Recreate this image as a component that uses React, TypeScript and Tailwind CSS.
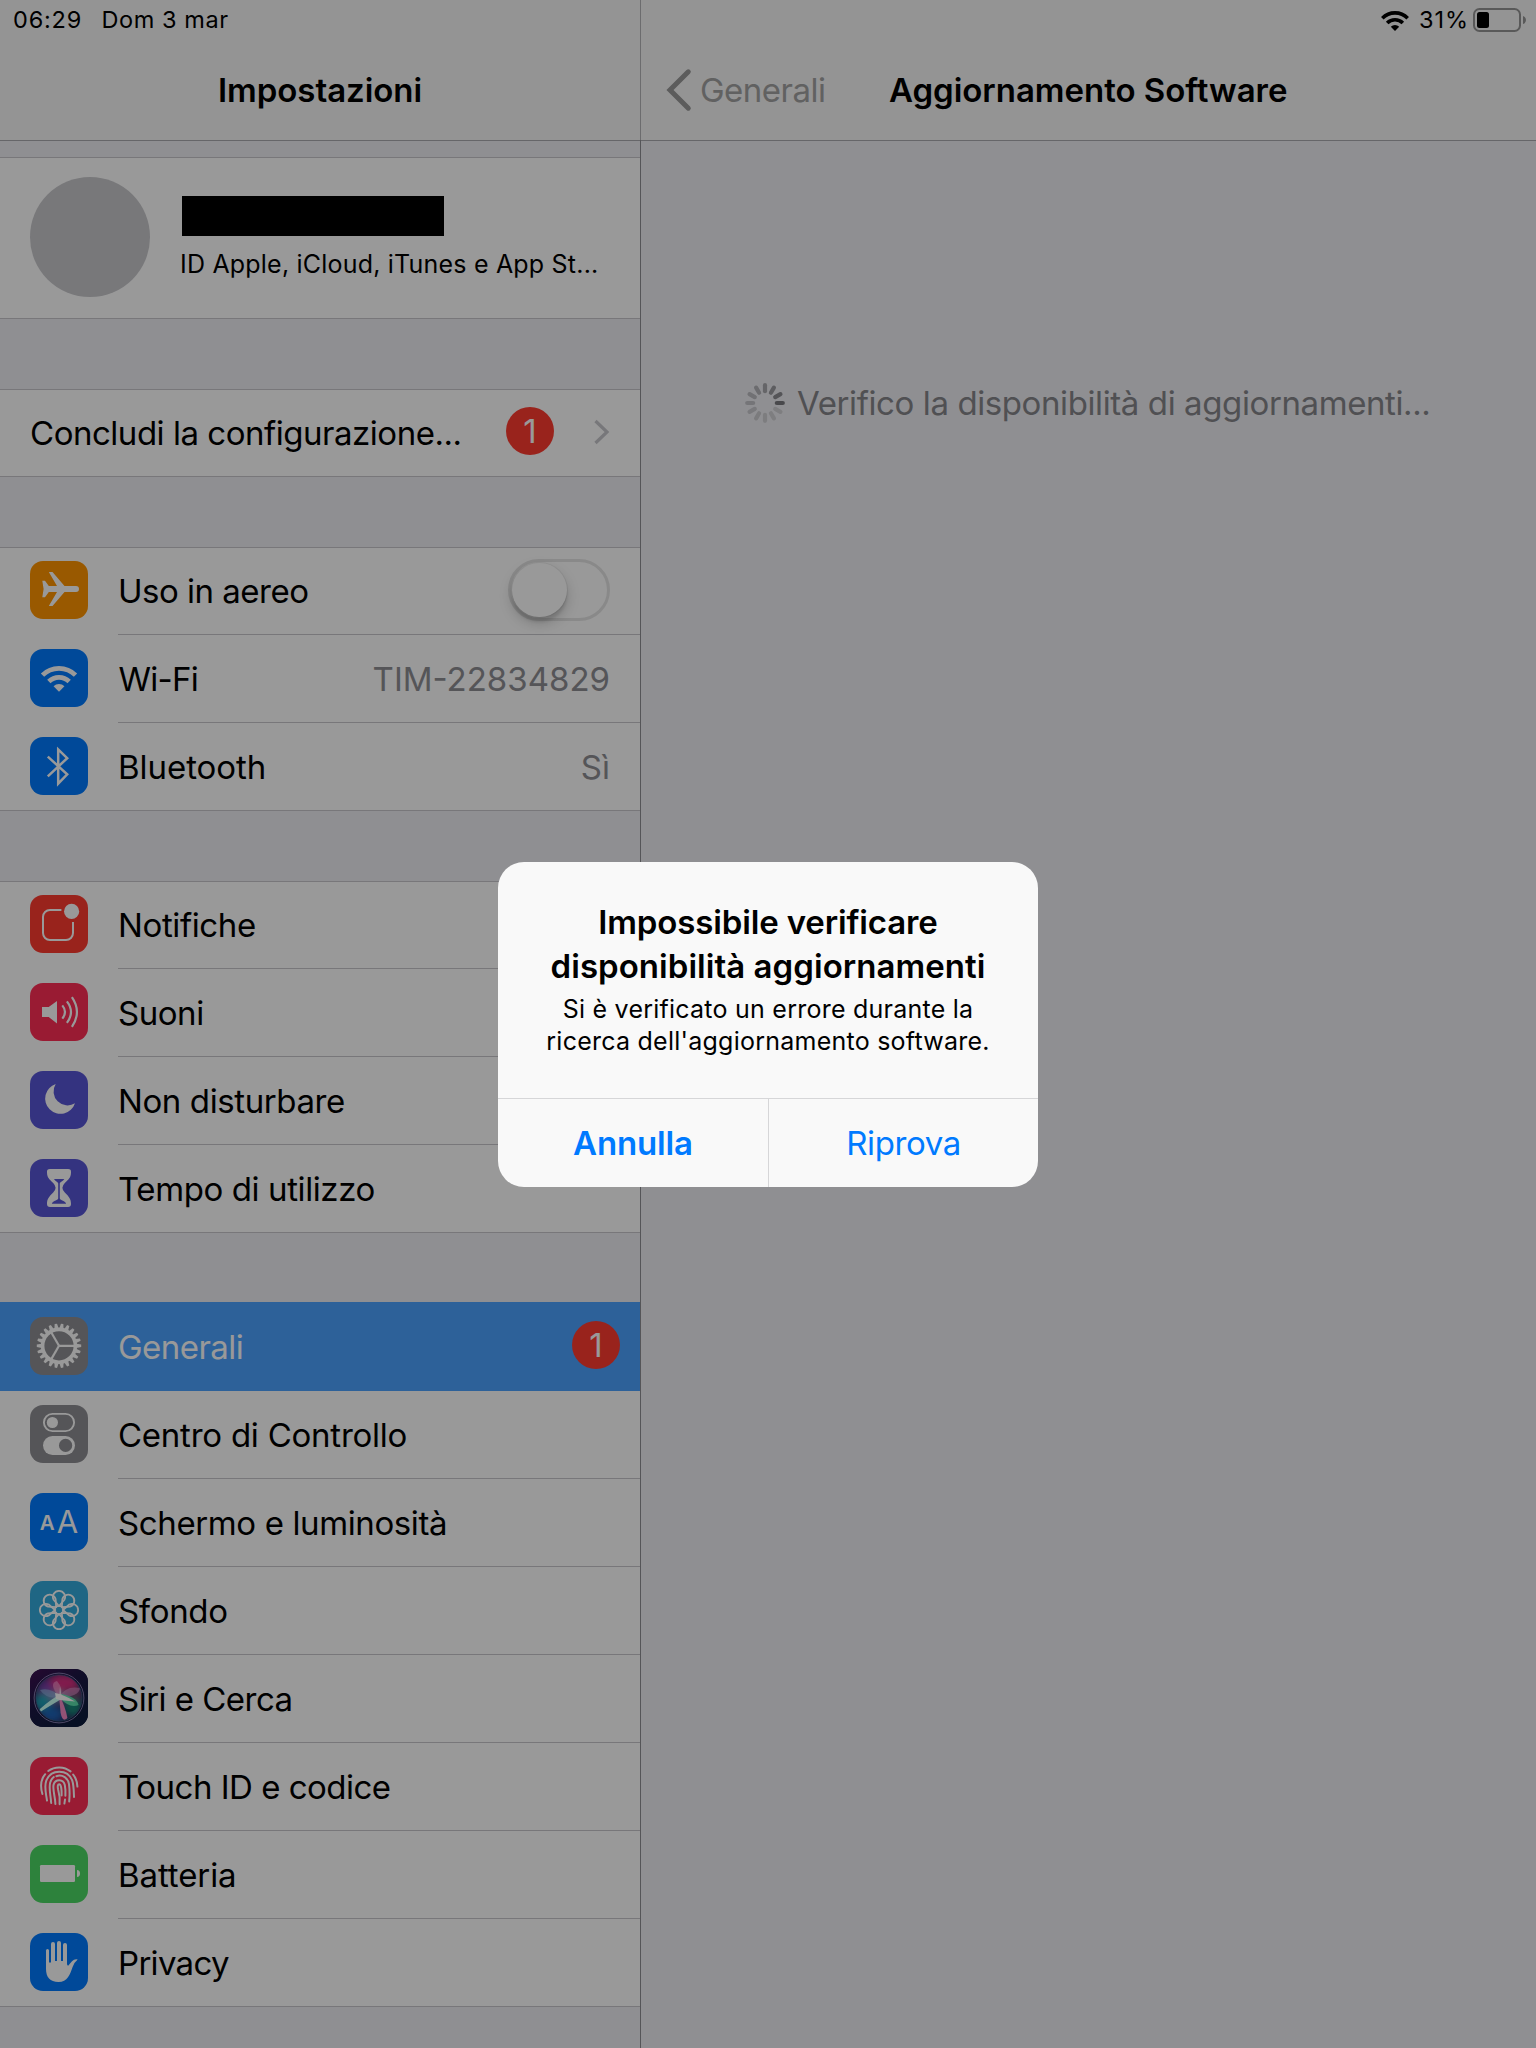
import type { ReactNode } from "react";

function WifiGlyph({ className }: { className: string }) {
  return (
    <svg viewBox="0 0 36.4 25.7" className={className} fill="none" stroke="currentColor">
      <path d="M1.69 9.19A23.35 23.35 0 0 1 34.71 9.19" strokeWidth="4.7" />
      <path d="M8.02 15.52A14.4 14.4 0 0 1 28.38 15.52" strokeWidth="4.7" />
      <path d="M18.2 25.7L12.75 20.25A7.7 7.7 0 0 1 23.65 20.25Z" fill="currentColor" stroke="none" />
    </svg>
  );
}

function Icon({ bg, children }: { bg: string; children: ReactNode }) {
  return (
    <div className={`mt-[14px] mr-[30px] ml-[30px] h-[58px] w-[58px] shrink-0 overflow-hidden rounded-[13px] text-white ${bg}`}>
      <svg viewBox="0 0 58 58" className="h-full w-full" fill="currentColor">
        {children}
      </svg>
    </div>
  );
}

const airplane = (
  <path d="M12.3 19.7H15L18.8 25H27L18.8 11H22.5L34.5 25H46a3 3 0 0 1 0 6H34.5L22.5 45H18.8L27 31H18.8L15 36.3H12.3L13.6 28Z" />
);

const wifi = (
  <g fill="none" stroke="currentColor" strokeWidth="4.7">
    <path d="M12.49 26.19A23.35 23.35 0 0 1 45.51 26.19" />
    <path d="M18.82 32.52A14.4 14.4 0 0 1 39.18 32.52" />
    <path d="M29 42.7L23.55 37.25A7.7 7.7 0 0 1 34.45 37.25Z" fill="currentColor" stroke="none" />
  </g>
);

const bluetooth = (
  <path
    d="M17.8 19.6L37.2 37.4L28.2 46.6V12.4L37.2 21.2L17.8 39.4"
    fill="none"
    stroke="currentColor"
    strokeWidth="2.5"
  />
);

const notifications = (
  <>
    <path
      d="M31.4 15H20a7 7 0 0 0-7 7V38a7 7 0 0 0 7 7H36a7 7 0 0 0 7-7V27"
      fill="none"
      stroke="currentColor"
      strokeWidth="2"
    />
    <circle cx="41.6" cy="16.4" r="7.6" />
  </>
);

const sounds = (
  <>
    <path d="M12 24H18.7L27 18V40.4L18.7 34H12Z" />
    <g fill="none" stroke="currentColor" strokeWidth="2.2">
      <path d="M32.3 22.4Q37.7 29 32.3 35.6" />
      <path d="M36.9 18.3Q45.1 29 36.9 39.8" />
      <path d="M41.9 14.2Q52 29 41.9 43.8" />
    </g>
  </>
);

const moon = <path d="M25.7 13A15.3 15.3 0 1 0 45 32.3A14 14 0 0 1 25.7 13Z" />;

const hourglass = (
  <>
    <path d="M20 10H38a3 3 0 0 1 3 3.3C41 19 38.5 20.2 34.8 24Q32.4 26.6 32.4 28.8T34.8 33.6C39 37.8 41 40 41 45a3 3 0 0 1-3 3H20a3 3 0 0 1-3-3C17 40 19 37.8 23.2 33.6Q25.6 31 25.6 28.8T23.2 24C19.5 20.2 17 19 17 13.3A3 3 0 0 1 20 10Z" />
    <path
      className="text-[#5856d6]"
      d="M24 20H34.3C33 22.6 30 22.8 29.8 24.4V39.6C30.4 41.6 35.4 42 36.2 44.8H21.8C22.6 42 27.6 41.6 28.2 39.6V24.4C28 22.8 25.3 22.6 24 20Z"
      fill="currentColor"
    />
  </>
);

const GEAR_TEETH = Array.from({ length: 22 }, (_, i) => (i * 360) / 22);

const gear = (
  <g transform="translate(29 28.8)">
    <circle r="16.4" fill="none" stroke="currentColor" strokeWidth="3.6" />
    {GEAR_TEETH.map((a) => (
      <path key={a} d="M17.4 -2.1L22.2 -1.2V1.2L17.4 2.1Z" transform={`rotate(${a})`} />
    ))}
    {[0, 120, 240].map((a) => (
      <path key={a} d="M0 -1.1H15.4V1.1H0Z" transform={`rotate(${a})`} />
    ))}
  </g>
);

const controlCenter = (
  <>
    <rect x="13.9" y="8.9" width="30.2" height="17.2" rx="8.6" fill="none" stroke="currentColor" strokeWidth="1.9" />
    <circle cx="22.4" cy="17.5" r="5.6" />
    <rect x="13" y="31" width="32" height="19" rx="9.5" />
    <circle cx="35.6" cy="40.4" r="6.6" className="text-[#8e8e93]" fill="currentColor" />
  </>
);

const display = (
  <g className="font-['Inter']" textAnchor="middle">
    <text x="17.2" y="37.3" fontSize="20.5" fontWeight="600">A</text>
    <text x="37.5" y="40" fontSize="31" fontWeight="400">A</text>
  </g>
);

const wallpaper = (
  <g transform="translate(29 29)" fill="none" stroke="currentColor" strokeWidth="1.8">
    <circle r="4.2" />
    {[0, 45, 90, 135, 180, 225, 270, 315].map((a) => (
      <path key={a} d="M0 -4L-5.4 -10.2A6.1 6.1 0 1 1 5.4 -10.2Z" transform={`rotate(${a})`} />
    ))}
  </g>
);

const siri = (
  <>
    <defs>
      <linearGradient id="siriBg" x1="0" y1="0" x2="0.7" y2="1">
        <stop offset="0" stopColor="#3f0f52" />
        <stop offset="0.5" stopColor="#1a1744" />
        <stop offset="1" stopColor="#0c1c3c" />
      </linearGradient>
      <filter id="siriSoft" x="-50%" y="-50%" width="200%" height="200%">
        <feGaussianBlur stdDeviation="3.6" />
      </filter>
      <filter id="siriGlow" x="-50%" y="-50%" width="200%" height="200%">
        <feGaussianBlur stdDeviation="0.6" />
      </filter>
      <clipPath id="siriOrb">
        <circle cx="29" cy="29" r="23" />
      </clipPath>
    </defs>
    <rect width="58" height="58" fill="url(#siriBg)" />
    <g clipPath="url(#siriOrb)">
      <rect width="58" height="58" fill="#2a2c60" />
      <g filter="url(#siriSoft)">
        <ellipse cx="33" cy="14" rx="16" ry="9" fill="#d82f80" />
        <ellipse cx="16" cy="20" rx="8" ry="9" fill="#7a3ea8" />
        <ellipse cx="13" cy="33" rx="9" ry="9" fill="#1fa0b4" />
        <ellipse cx="22" cy="45" rx="11" ry="8" fill="#1d64b8" />
        <ellipse cx="43" cy="38" rx="9" ry="9" fill="#128a78" />
        <ellipse cx="46" cy="24" rx="6" ry="6" fill="#7c3a6c" />
        <ellipse cx="28" cy="28" rx="8" ry="5" fill="#b8c8f0" opacity="0.7" />
      </g>
      <g filter="url(#siriGlow)">
        <path d="M30 27Q20 18 10 21Q17 31 30 28Z" fill="#8fb4e0" opacity="0.6" />
        <path d="M29 28Q18 14 27 12Q34 20 30 28Z" fill="#f59fd0" opacity="0.6" />
        <path d="M29 28Q36 16 50 19Q49 28 30 28Z" fill="#d993c8" opacity="0.6" />
        <path d="M30 25Q46 27 48.6 36Q40 40 30 29Z" fill="#5fe8b0" opacity="0.9" />
        <path d="M29 26Q35 36 37.4 49Q32.6 54 30.6 44Z" fill="#ff8cc8" opacity="0.95" />
        <path d="M31 25Q21 30 9.6 40.2L11 42.4Q24 34.4 33 29Z" fill="#c9fff4" />
        <path d="M25 24Q34 25.6 45 32.4Q33 32 26 30Z" fill="#ffffff" />
        <path d="M29 30L30 17L32 30Z" fill="#ffffff" opacity="0.7" />
      </g>
    </g>
    <circle cx="29" cy="29" r="24.9" fill="none" stroke="#8f86b8" strokeWidth="0.9" />
    <circle cx="29" cy="29" r="23.2" fill="none" stroke="#5c8fb0" strokeWidth="0.6" opacity="0.7" />
  </>
);

const fingerprint = (
  <g fill="none" stroke="currentColor" strokeWidth="2" strokeLinecap="round">
    <path d="M18.2 14A18.6 18.6 0 0 1 40.6 14.4" />
    <path d="M15.2 17.2C10.8 22.4 10 29 12.4 37" />
    <path d="M43.2 17.6C46 21 47.2 25 47.4 29.6" />
    <path d="M17 43.6C16 36 14 30 16.2 23.8C21 11.8 37.4 11.8 42.2 23.4C43.8 28 43.8 34 44 40" />
    <path d="M21.2 46C20.6 38 18.6 31 20.2 25.4C21 22.6 22 21.4 23.8 20" />
    <path d="M26.4 19.2C32.6 17 38.2 21.4 39 27.2C39.6 32 39.8 38 39.2 44.4" />
    <path d="M25.4 47C25.2 40 22.4 32 23.6 27.6C25.4 21.6 33.4 21.8 34.8 28C35.4 31 35.6 35 35.4 38.8" />
    <path d="M35 42.6L34.4 46.6" />
    <path d="M29.6 47.2C30.2 41 29.4 37 28.2 33C27.4 29.6 27.6 27.2 29.2 27.2C31.2 27.2 31.8 33 31.6 38.4" />
  </g>
);

const battery = (
  <>
    <rect x="10" y="20" width="35" height="17" rx="1.2" />
    <path d="M47 25Q50 25.4 50 28.5T47 32Z" />
  </>
);

const hand = (
  <>
    <rect x="16" y="16" width="3" height="20" rx="1.5" />
    <rect x="21" y="9" width="4" height="24" rx="2" />
    <rect x="27" y="8" width="4" height="24" rx="2" />
    <rect x="33" y="10" width="4" height="24" rx="2" />
    <path d="M16 29.5H21V28H37V31Q37.6 34 39.2 31.4L42 28.2Q44.4 25.6 47.7 26.4Q44.4 29 42.6 34C40 41.4 37.6 49 28.5 49C20 49 16 44 16 36Z" />
  </>
);

function Badge({ className }: { className: string }) {
  return (
    <div className={`mt-[18px] h-12 w-12 shrink-0 rounded-full bg-[#ff3b30] text-center text-[33px] leading-[48px] text-white ${className}`}>
      1
    </div>
  );
}

function Group({ children }: { children: ReactNode }) {
  return (
    <div className="mb-[70px] bg-white shadow-[inset_0_1px_0_#c8c7cc,inset_0_-1px_0_#c8c7cc]">{children}</div>
  );
}

type RowProps = {
  bg: string;
  icon: ReactNode;
  label: string;
  tracking?: string;
  last?: boolean;
  selected?: boolean;
  children?: ReactNode;
};

function Row({ bg, icon, label, tracking = "tracking-[-0.45px]", last, selected, children }: RowProps) {
  return (
    <div className={`flex h-[88px] items-start ${selected ? "bg-[#4ca2ff] text-white shadow-[0_-1px_0_#4ca2ff]" : ""}`}>
      <Icon bg={bg}>{icon}</Icon>
      <div className={`flex h-[88px] flex-1 justify-between leading-[88px] ${last || selected ? "" : "border-b border-[#c8c7cc]"}`}>
        <span className={`whitespace-nowrap ${tracking}`}>{label}</span>
        {children}
      </div>
    </div>
  );
}

function Sidebar() {
  return (
    <aside className="h-full w-[640px] shrink-0">
      <header className="h-[141px] border-b border-[#aaaaaf] bg-[#f7f7f7]">
        <div className="flex h-[39px] items-center pl-[13px] text-[23.5px]">
          <span className="mr-[19.5px] tracking-[0.8px]">06:29</span>
          <span className="tracking-[0.55px]">Dom 3 mar</span>
        </div>
        <h1 className="h-[102px] text-center text-[33px] leading-[102px] font-semibold tracking-[-0.06px]">Impostazioni</h1>
      </header>

      <div className="pt-4">
        <Group>
          <div className="flex h-[162px]">
            <div className="mt-5 ml-[30px] h-[120px] w-[120px] rounded-full bg-[#c8c8cc]" />
            <div className="ml-[30px]">
              <div className="mt-[39px] ml-[2px] h-10 w-[262px] bg-black" />
              <div className="mt-[12px] text-[25px] leading-8 tracking-[0.2px] whitespace-nowrap">
                ID Apple, iCloud, iTunes e App St...
              </div>
            </div>
          </div>
        </Group>

        <Group>
          <div className="flex h-[88px] pl-[30px] leading-[88px]">
            <span className="w-[476px] tracking-[-0.476px] whitespace-nowrap">Concludi la configurazione...</span>
            <Badge className="" />
            <svg viewBox="0 0 18 28" className="mt-[29px] ml-[39px] h-7 w-[18px]" fill="none" stroke="#c7c7cc" strokeWidth="3.2">
              <path d="M2.5 3L14 14L2.5 25" />
            </svg>
          </div>
        </Group>

        <Group>
          <Row bg="bg-[#ff9500]" icon={airplane} label="Uso in aereo" tracking="tracking-[-0.5px]">
            <div className="mt-3 mr-[30px] h-[62px] w-[102px] rounded-full border-[3px] border-[#e5e5e5] pt-px pl-px">
              <div className="h-[54px] w-[55px] rounded-full bg-white shadow-[0_0_0_1px_rgba(0,0,0,0.05),0_6px_14px_rgba(0,0,0,0.2),0_5px_3px_rgba(0,0,0,0.1)]" />
            </div>
          </Row>
          <Row bg="bg-[#007aff]" icon={wifi} label="Wi-Fi" tracking="tracking-[-0.7px] ml-[0.5px]">
            <span className="pr-[30px] tracking-[0px] text-[#8e8e93]">TIM-22834829</span>
          </Row>
          <Row bg="bg-[#007aff]" icon={bluetooth} label="Bluetooth" tracking="tracking-[-0.05px]" last>
            <span className="pr-[30px] text-[#8e8e93]">Sì</span>
          </Row>
        </Group>

        <Group>
          <Row bg="bg-[#ff3b30]" icon={notifications} label="Notifiche" tracking="tracking-[-0.38px]" />
          <Row bg="bg-[#ff2d55]" icon={sounds} label="Suoni" />
          <Row bg="bg-[#5856d6]" icon={moon} label="Non disturbare" tracking="tracking-[-0.4px]" />
          <Row bg="bg-[#5856d6]" icon={hourglass} label="Tempo di utilizzo" tracking="tracking-[-0.4px]" last />
        </Group>

        <Group>
          <Row bg="bg-[#8e8e93]" icon={gear} label="Generali" tracking="tracking-[-0.55px]" selected>
            <Badge className="mr-5" />
          </Row>
          <Row bg="bg-[#8e8e93]" icon={controlCenter} label="Centro di Controllo" tracking="tracking-[-0.24px]" />
          <Row bg="bg-[#007aff]" icon={display} label="Schermo e luminosità" tracking="tracking-[-0.38px]" />
          <Row bg="bg-[#34aadc]" icon={wallpaper} label="Sfondo" tracking="tracking-[-0.35px]" />
          <Row bg="bg-[#1a1744]" icon={siri} label="Siri e Cerca" tracking="tracking-[-0.52px]" />
          <Row bg="bg-[#ff2d55]" icon={fingerprint} label="Touch ID e codice" tracking="tracking-[-0.5px]" />
          <Row bg="bg-[#4cd964]" icon={battery} label="Batteria" tracking="tracking-[-0.1px]" />
          <Row bg="bg-[#007aff]" icon={hand} label="Privacy" tracking="tracking-[-0.7px]" last />
        </Group>
      </div>
    </aside>
  );
}

const SPOKES = [
  "#d0d0d4", "#cdcdd1", "#cacacf", "#c4c4c9", "#bcbcc1", "#b4b4b9",
  "#a9a9ae", "#9c9ca1", "#8c8c91", "#7a7a7f", "#d2d2d6", "#d2d2d6",
];

function Spinner() {
  // Spokes run clockwise from six o'clock; the darkest one leads at three o'clock.
  return (
    <svg viewBox="-21 -21 42 42" className="h-[42px] w-[42px]">
      {SPOKES.map((color, i) => (
        <line
          key={i}
          x1="0" y1="11.8" x2="0" y2="17.8"
          stroke={color}
          strokeWidth="4.2"
          strokeLinecap="round"
          transform={`rotate(${i * 30})`}
        />
      ))}
    </svg>
  );
}

function Detail() {
  return (
    <main className="h-full flex-1">
      <header className="h-[141px] border-b border-[#aaaaaf] bg-[#f7f7f7]">
        <div className="flex h-[39px] items-center justify-end pr-[10px] text-[23.5px]">
          <WifiGlyph className="mt-[2px] mr-[10px] h-5 w-[28px]" />
          <span className="mr-1 tracking-[0.96px]">31%</span>
          <svg viewBox="0 0 53 24" className="mt-px h-6 w-[53px]">
            <rect x="1" y="1" width="46" height="22" rx="5.5" fill="none" stroke="#949494" strokeWidth="2" />
            <rect x="4" y="4" width="12" height="16" rx="2.5" />
            <path d="M50 8Q53 9 53 12T50 16Z" fill="#949494" />
          </svg>
        </div>
        <div className="flex h-[102px] items-center text-[33px] leading-[102px]">
          <svg viewBox="0 0 26 44" className="ml-[25px] h-11 w-[26px]" fill="none" stroke="#999999" strokeWidth="5" strokeLinecap="round">
            <path d="M22.3 3.8L4 22L22.3 40.2" />
          </svg>
          <span className="ml-2 w-[189px] tracking-[-0.5px] text-[#a2a2a2]">Generali</span>
          <h2 className="font-semibold tracking-[-0.03px] whitespace-nowrap">Aggiornamento Software</h2>
        </div>
      </header>
      <div className="flex items-center pt-[240px] pl-[103px] text-[#86868a]">
        <Spinner />
        <span className="ml-[11px] pt-px leading-[42px] tracking-[-0.4px] whitespace-nowrap">
          Verifico la disponibilità di aggiornamenti...
        </span>
      </div>
    </main>
  );
}

function Alert() {
  return (
    <div className="flex h-[325px] w-[540px] flex-col overflow-hidden rounded-[26px] bg-[#f9f9f9] text-center">
      <div className="h-[236px] pt-[38px]">
        <h3 className="leading-[44px] font-semibold whitespace-nowrap">
          <span className="tracking-[-0.14px]">Impossibile verificare</span>
          <br />
          <span className="tracking-[0.04px]">disponibilità aggiornamenti</span>
        </h3>
        <p className="mt-[5px] text-[25px] leading-8 tracking-[0.24px] whitespace-nowrap">
          Si è verificato un errore durante la
          <br />
          ricerca dell'aggiornamento software.
        </p>
      </div>
      <div className="flex h-[89px] border-t border-[#d6d6d8] leading-[88px] text-[#007aff]">
        <button className="w-[270px] font-semibold tracking-[-0.14px]">Annulla</button>
        <button className="w-[270px] border-l border-[#d6d6d8] tracking-[-0.4px]">Riprova</button>
      </div>
    </div>
  );
}

export default function App() {
  return (
    <div className="relative h-[2048px] w-[1536px] overflow-hidden bg-[#efeff4] font-['Inter',sans-serif] text-[33px] text-black">
      <div className="flex h-full">
        <Sidebar />
        <div className="flex w-px shrink-0 flex-col">
          <div className="h-[140px] bg-[#b4b4b8]" />
          <div className="flex-1 bg-[#8e8e93]" />
        </div>
        <Detail />
      </div>
      <div className="absolute inset-0 flex items-center justify-center bg-black/40 pt-px">
        <Alert />
      </div>
    </div>
  );
}
